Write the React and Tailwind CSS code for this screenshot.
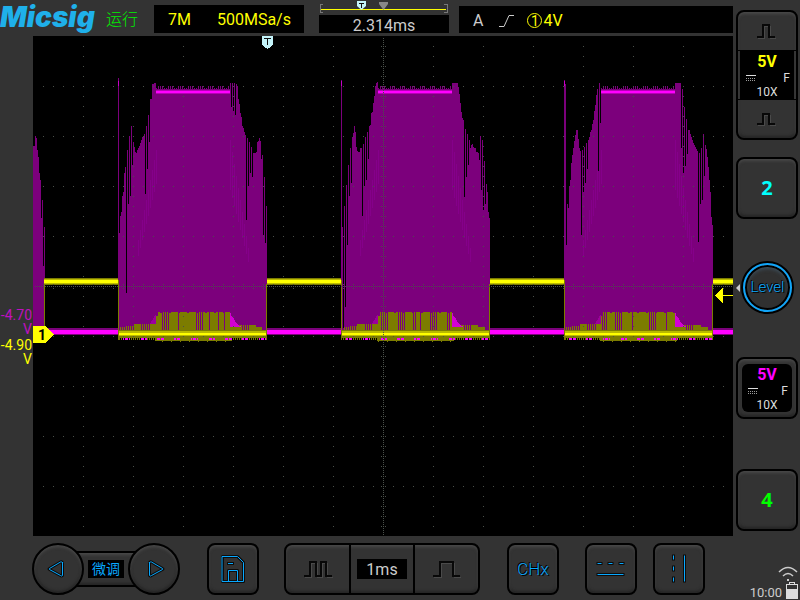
import React from 'react';

const ORIGIN_X = 33;
const ORIGIN_Y = 36;
const PLATEAU = 74;

const BURSTS = [
  {
    start: 118,
    left: [78, 233, 216, 212, 196, 192, 173, 167, 293, 150, 204, 136, 196, 126, 165, 142, 147, 152, 153, 150, 148, 146, 143, 140, 137, 136, 134, 194, 126, 169, 115, 142, 99, 99, 84, 84, 83, 83],
    right: [83, 107, 83, 111, 83, 115, 84, 86, 99, 104, 113, 117, 126, 128, 132, 135, 220, 138, 186, 142, 173, 147, 177, 153, 153, 153, 152, 142, 141, 138, 141, 159, 155, 235, 177, 243, 206],
    slits: [162, 164, 166, 168, 178, 196, 198, 200, 202, 209, 218, 224],
  },
  {
    start: 341,
    left: [80, 227, 328, 206, 307, 185, 245, 165, 196, 148, 183, 137, 133, 126, 132, 147, 151, 152, 152, 148, 148, 216, 144, 186, 137, 180, 132, 159, 126, 125, 113, 112, 103, 96, 86, 83, 82],
    right: [83, 83, 83, 83, 83, 83, 87, 94, 103, 112, 118, 120, 197, 129, 177, 134, 165, 140, 148, 145, 144, 147, 148, 148, 152, 152, 153, 160, 136, 190, 140, 210, 161, 204, 184, 192, 212, 218],
    slits: [381, 383, 385, 387, 398, 400, 402, 404, 413, 415, 420, 430, 432, 434, 436, 447, 449],
  },
  {
    start: 564,
    left: [80, 84, 245, 204, 208, 186, 180, 163, 155, 148, 141, 135, 130, 130, 139, 148, 151, 235, 150, 192, 147, 183, 143, 169, 140, 137, 132, 130, 124, 120, 111, 105, 95, 89, 171, 83, 123],
    right: [83, 83, 83, 83, 83, 83, 148, 89, 173, 107, 166, 119, 154, 130, 130, 134, 137, 140, 143, 145, 147, 149, 151, 242, 153, 204, 148, 200, 134, 176, 145, 149, 157, 167, 180, 192, 217, 225],
    slits: [602, 604, 606, 615, 617, 619, 621, 632, 649, 651, 653, 655, 666],
  },
];

const TAIL = [146, 146, 136, 138, 150, 157, 173, 180, 218, 200, 266, 227];

const bar = (x, top, bottom, w = 1) => `M${x} ${top}h${w}V${bottom}h${-w}z`;

function gridPath() {
  let d = '';
  for (let x = 83; x < 733; x += 50) {
    for (let y = 46; y < 536; y += 10) d += bar(x, y, y + 1);
  }
  for (let y = 86; y < 536; y += 50) {
    for (let x = 43; x < 733; x += 10) d += bar(x, y, y + 1);
  }
  for (let y = 38; y < 536; y += 2) d += bar(383, y, y + 1);
  for (let x = 35; x < 733; x += 2) d += bar(x, 286, 287);
  for (let y = 46; y < 536; y += 10) d += bar(381, y, y + 1) + bar(385, y, y + 1);
  for (let x = 43; x < 733; x += 10) d += bar(x, 284, 285) + bar(x, 288, 289);
  return d;
}

function Burst({ start, left, right, slits }) {
  const p0 = start + left.length;
  const p1 = p0 + PLATEAU;
  const end = p1 + right.length;
  let fill = '';
  left.forEach((t, i) => { fill += bar(start + i, t, 338); });
  right.forEach((t, i) => { fill += bar(p1 + i, t, 338); });
  let comb = '';
  for (let i = 0; i < PLATEAU; i += 1) {
    comb += bar(p0 + i, i % 2 ? 89 : (i * 7) % 5 > 1 ? 86 : 88, 338);
  }
  let olive = '';
  for (let x = start + 2; x < p0; x += 1) {
    const rise = x < start + 16 ? 327 - ((x - start) >> 3) : 324;
    if (x < start + 16 ? x % 2 === 0 : (x < start + 23 || x > start + 31 || x % 2 === 0)) olive += bar(x, rise, 331);
  }
  for (let x = p0; x < p1; x += 1) {
    if (!slits.includes(x)) olive += bar(x, x - p0 < 2 ? 316 : x % 9 < 7 ? 312 : 313, 331);
  }
  for (let x = p1; x < end - 5; x += 1) {
    if (x < p1 + 11 || x > p1 + 18 || x % 2) olive += bar(x, x < p1 + 26 ? 325 : 327, 331);
  }
  let fringe = '';
  let pink = '';
  for (let x = start; x < end; x += 1) {
    const mid = x > p0 - 2 && x < p1 + 2;
    fringe += bar(x, 336, mid ? (x % 9 === 0 ? 342 : 341) : x % 2 ? 340 : 338);
    const phase = (x - start + 12) % 17;
    if (phase < 7 && x % 4) pink += bar(x, 338, 340);
  }
  let shade = '';
  for (let i = 0; i < 20; i += 2) {
    shade += bar(p0 - 18 + i, 240 - i * 5, 256 - i * 4);
    shade += bar(p1 + i, 140 + i * 6, 190 + i * 4);
  }
  return (
    <g>
      <path d={fill + comb} fill="#7c007c" />
      <path d={shade} fill="#85008a" />
      <path d={bar(p0, 90, 94, PLATEAU)} fill="#b400b4" />
      <path d={bar(p0, 91, 93, PLATEAU)} fill="#ff00ff" />
      <path d={bar(start, 81, 86)} fill="#c800c8" />
      <path d={olive} fill="#7c7c00" />
      <path d={`M${p1} 312l2 5l2 2l3 5l5 3h-12z`} fill="#d400d4" />
      <path d={`M${p0} 314v10h-6z`} fill="#9c009c" />
      <path d={fringe} fill="#7c7c00" />
      <path d={pink} fill="#ff00ff" />
      <path d={bar(start, 330, 337, end - start)} fill="#7c7c00" />
      <path d={bar(start, 331, 336, end - start)} fill="#b9b900" />
      <path d={bar(start, 333, 335, end - start)} fill="#ffff00" />
      <path d={bar(start, 280, 340) + bar(end - 1, 284, 340)} fill="#7c7c00" />
    </g>
  );
}

function IdleLevels({ from, to }) {
  const w = to - from;
  return (
    <g>
      <path d={bar(from, 278, 285, w)} fill="#7c7c00" />
      <path d={bar(from, 279, 284, w)} fill="#b9b900" />
      <path d={bar(from, 280, 283, w)} fill="#ffff00" />
      <path d={bar(from, 328, 335, w)} fill="#7c007c" />
      <path d={bar(from, 330, 334, w)} fill="#ff00ff" />
    </g>
  );
}

function TriggerFlag({ x, y }) {
  return (
    <g>
      <path d={`M${x} ${y}h11v9l-5.500 4l-5.500-4z`} fill="#c4f4fa" />
      <path d={`M${x + 2} ${y + 2}h7v1h-3v6h-1v-6h-3z`} fill="#111" />
    </g>
  );
}

function Scope() {
  return (
    <svg
      className="block h-full w-full bg-black"
      viewBox={`${ORIGIN_X} ${ORIGIN_Y} 700 500`}
      shapeRendering="crispEdges"
      role="img"
      aria-label="Waveform"
    >
      <path d={TAIL.map((t, i) => bar(33 + i, t, 333)).join('')} fill="#7c007c" />
      <path d={bar(44, 280, 333)} fill="#7c7c00" />
      <IdleLevels from={44} to={119} />
      <IdleLevels from={267} to={342} />
      <IdleLevels from={490} to={565} />
      <IdleLevels from={713} to={733} />
      {BURSTS.map((b) => <Burst key={b.start} {...b} />)}
      <path d={gridPath()} fill="#4a504a" />
      <TriggerFlag x={262} y={36} />
      <path d="M33 326h13l8 8.500l-8 8.500h-13z" fill="#ffff00" />
      <text x="38" y="340" fontSize="14" fontWeight="700" fill="#000" className="font-[Roboto,sans-serif]">1</text>
      <path d="M715 295.500l8-7.500v7h10v1h-10v7z" fill="#ffff00" />
    </svg>
  );
}

const KEY = 'border-2 border-black bg-[#333] shadow-[inset_0_2px_3px_#484848,inset_0_-2px_3px_#242424]';

function SquareKey({ label, children }) {
  return (
    <button type="button" aria-label={label} className={`flex size-[52px] shrink-0 items-center justify-center rounded-lg ${KEY}`}>
      {children}
    </button>
  );
}

function Pulse({ d, w, h }) {
  return (
    <svg width={w} height={h} viewBox={`0 0 ${w} ${h}`} fill="none" shapeRendering="crispEdges">
      <path d={d} stroke="#4a4a4a" transform="translate(1 1)" />
      <path d={d} stroke="#080808" strokeWidth="2" />
    </svg>
  );
}

function Glyph({ d, w, h }) {
  return (
    <svg width={w} height={h} viewBox={`0 0 ${w} ${h}`} fill="none" strokeLinejoin="round">
      <path d={d} stroke="#0c0c0c" strokeWidth="3" strokeLinecap="square" />
      <path d={d} stroke="#08a8ff" strokeWidth="1" strokeLinecap="square" />
    </svg>
  );
}

function ChannelReadout({ color }) {
  return (
    <span className="flex h-full w-full flex-col items-center pt-px text-[#ddd]">
      <span className={`text-base/5 font-bold ${color}`}>5V</span>
      <span className="flex w-full items-center justify-between pl-1.5 pr-1 text-xs/3">
        <svg width="10" height="6" viewBox="0 0 10 6" shapeRendering="crispEdges" stroke="#ddd">
          <path d="M0 .5h10" />
          <path d="M0 3.500h10M0 5.500h10" strokeDasharray="1 1" opacity=".7" />
        </svg>
        <span>F</span>
      </span>
      <span className="text-xs/4">10X</span>
    </span>
  );
}

function Header() {
  return (
    <header className="flex h-9 items-end pb-[3px]">
      <h1 className="w-[106px] shrink-0 font-[Inter,sans-serif] text-[28px]/8 font-black italic text-[#1fb0ea]">Micsig</h1>
      <span className="w-12 shrink-0 font-['Noto_Sans_CJK_SC',sans-serif] text-base/[30px] font-light text-[#00f000]">运行</span>
      <div className="flex h-7 w-[150px] shrink-0 items-center gap-[26px] bg-black pl-3.5 pt-0.5 text-base text-[#ffff00]">
        <span>7M</span>
        <span>500MSa/s</span>
      </div>
      <div className="ml-[15px] flex w-[130px] shrink-0 flex-col items-center">
        <svg width="130" height="15" viewBox="0 0 130 15" fill="none">
          <path d="M4 4.500h-3v8h3M125 4.500h3v8h-3" stroke="#777" shapeRendering="crispEdges" />
          <path d="M2 9.500h125" stroke="#ffff00" strokeWidth="1" shapeRendering="crispEdges" />
          <path d="M38 1h9v5l-4.500 4l-4.500-4z" fill="#c4f4fa" />
          <path d="M40 3.500h5M42.500 3v5" stroke="#111" />
          <path d="M60 2h9v2l-4.500 6l-4.500-6z" fill="#888" />
        </svg>
        <div className="h-[18px] w-full bg-black text-center text-base/[21px] text-[#ccc]">2.314ms</div>
      </div>
      <div className="ml-2.5 flex h-[27px] flex-1 items-center bg-black pl-3.5 pt-0.5 text-base text-[#ffff00]">
        <span className="text-[#ccc]">A</span>
        <svg className="ml-4" width="16" height="14" viewBox="0 0 16 14" fill="none" stroke="#ccc">
          <path d="M0 12.500h5l5-11h5" />
        </svg>
        <span className="ml-3 flex size-[15px] items-center justify-center rounded-full border border-[#ffff00] text-sm/3">1</span>
        <span className="ml-px">4V</span>
      </div>
    </header>
  );
}

function Footer() {
  return (
    <footer className="flex h-16 shrink-0 items-start pl-8 pt-[7px]">
      <div className="flex items-center">
        <button type="button" aria-label="Previous" className={`z-10 flex size-[52px] items-center justify-center rounded-full pr-1 ${KEY}`}>
          <Glyph w={18} h={18} d="M15.500 2.500v13q-1 1-2 0l-11-6q-1-.5 0-1l11-6.500q1-.5 2 .5z" />
        </button>
        <div className={`-mx-2.5 flex h-9 w-16 items-center justify-center ${KEY}`}>
          <span className="h-[18px] bg-black px-1 font-['Noto_Sans_CJK_SC',sans-serif] text-sm/4 text-[#08a8ff]">微调</span>
        </div>
        <button type="button" aria-label="Next" className={`z-10 flex size-[52px] items-center justify-center rounded-full pl-1 ${KEY}`}>
          <Glyph w={18} h={18} d="M2.500 2.500v13q1 1 2 0l11-6q1-.5 0-1l-11-6.500q-1-.5-2 .5z" />
        </button>
      </div>
      <div className="ml-[27px]">
        <SquareKey label="Save">
          <Glyph w={26} h={28} d="M2.500 1.500h15l6 6v19h-21zM8.500 26.500v-11h9v11M8.500 8.500h4" />
        </SquareKey>
      </div>
      <div className={`ml-[25px] flex h-[52px] w-[196px] rounded-lg ${KEY}`}>
        <button type="button" aria-label="Shorter time base" className="flex flex-1 items-center justify-center">
          <Pulse w={30} h={18} d="M1 16h6v-14h6v14h5v-14h5v14h6" />
        </button>
        <div className="flex w-[66px] items-center justify-center border-x-2 border-black">
          <span className="h-5 w-[50px] bg-black text-center text-base/[22px] text-[#ccc]">1ms</span>
        </div>
        <button type="button" aria-label="Longer time base" className="flex flex-1 items-center justify-center">
          <Pulse w={30} h={18} d="M1 16h7v-14h13v14h7" />
        </button>
      </div>
      <div className="ml-[27px]">
        <SquareKey label="CHx">
          <span className="text-[17px]/[22px] font-light text-[#08a8ff] [text-shadow:1px_1px_0_#000,-1px_-1px_0_#000]">CHx</span>
        </SquareKey>
      </div>
      <div className="ml-[26px]">
        <SquareKey label="Horizontal cursors">
          <Glyph w={30} h={16} d="M2 2.500h3M13 2.500h3M24 2.500h3M2 13.500h25" />
        </SquareKey>
      </div>
      <div className="ml-4">
        <SquareKey label="Vertical cursors">
          <Glyph w={16} h={30} d="M2.500 2v3M2.500 13v3M2.500 24v3M13.500 2v25" />
        </SquareKey>
      </div>
    </footer>
  );
}

function SidePanel() {
  return (
    <aside className="flex w-[67px] shrink-0 flex-col pl-[3px] pr-0.5 pt-2.5">
      <div className={`flex h-[130px] flex-col overflow-hidden rounded-lg ${KEY}`}>
        <button type="button" aria-label="Channel 1 scale down" className="flex h-[39px] items-center justify-center border-b border-black">
          <Pulse w={22} h={16} d="M1 14h6v-12h6v12h6" />
        </button>
        <div className="mx-0.5 h-12 bg-black">
          <ChannelReadout color="text-[#ffff00]" />
        </div>
        <button type="button" aria-label="Channel 1 scale up" className="flex h-[39px] items-center justify-center border-t border-black">
          <Pulse w={22} h={14} d="M1 12h6v-10h6v10h6" />
        </button>
      </div>
      <button type="button" className={`mt-[17px] h-[62px] rounded-lg font-['Open_Sans',sans-serif] text-xl font-bold text-[#00ffff] ${KEY}`}>2</button>
      <div className="mt-[42px] flex items-center">
        <svg width="5" height="8" viewBox="0 0 5 8"><path d="M4 0v8l-4-4z" fill="#ccc" /></svg>
        <button type="button" className="flex size-[53px] shrink-0 rounded-full border-2 border-black bg-black">
          <span className="flex h-full w-full items-center justify-center rounded-full border-2 border-[#12a5f8] bg-[#303030] text-[15px] font-light text-[#08a8ff] shadow-[inset_0_0_0_2px_#000,inset_0_3px_4px_#405868] [text-shadow:1px_1px_0_#000,-1px_-1px_0_#000]">Level</span>
        </button>
      </div>
      <button type="button" aria-label="Channel 3" className={`mt-[43px] h-[62px] rounded-lg px-1 py-[5px] ${KEY}`}>
        <span className="block h-full rounded-md bg-black">
          <ChannelReadout color="text-[#ff00ff]" />
        </span>
      </button>
      <button type="button" className={`mt-[50px] h-[62px] rounded-lg font-['Open_Sans',sans-serif] text-xl font-bold text-[#00ff00] ${KEY}`}>4</button>
      <div className="mt-auto flex flex-col items-end">
        <svg width="20" height="16" viewBox="0 0 20 16" fill="none" stroke="#ccc" strokeWidth="1.500">
          <path d="M1 6q9-9 18 0M5 10q5-5 10 0" />
          <path d="M9 13h2v2h-2z" fill="#ccc" stroke="none" />
        </svg>
        <div className="flex items-end gap-1">
          <span className="text-[13px]/[14px] text-[#ccc]">10:00</span>
          <svg width="12" height="18" viewBox="0 0 12 18" shapeRendering="crispEdges">
            <path d="M3 0h6v2h3v15h-12v-15h3z" fill="#ddd" />
            <path d="M1 3h10v4h-10zM4 1h4v1h-4z" fill="#333" />
          </svg>
        </div>
      </div>
    </aside>
  );
}

export default function App() {
  return (
    <div className="flex h-screen w-full overflow-hidden bg-[#333] font-[Roboto,sans-serif]">
      <div className="flex min-w-0 flex-1 flex-col">
        <Header />
        <main className="flex min-h-0 flex-1">
          <div className="flex w-[33px] shrink-0 flex-col items-end gap-0.5 pr-px pt-[272px] text-sm/[14px]">
            <div className="flex flex-col items-end text-[#c010c0]">
              <span>-4.70</span>
              <span>V</span>
            </div>
            <div className="flex flex-col items-end text-[#ffff00]">
              <span>-4.90</span>
              <span>V</span>
            </div>
          </div>
          <div className="min-w-0 flex-1 bg-black">
            <Scope />
          </div>
        </main>
        <Footer />
      </div>
      <SidePanel />
    </div>
  );
}
